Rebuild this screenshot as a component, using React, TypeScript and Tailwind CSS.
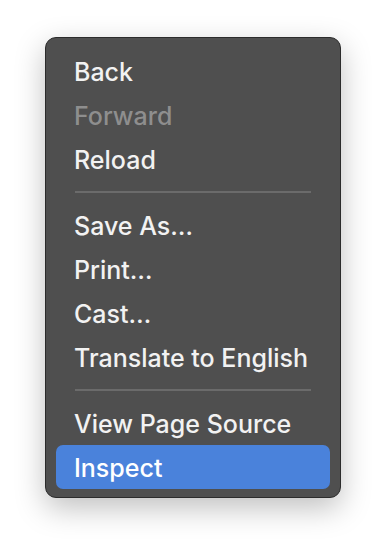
export default function App() {
  const Sep = () => (
    <div className="flex h-[22px] items-center px-[29px]">
      <div className="h-[2px] w-full bg-[#6b6b6b]" />
    </div>
  );
  const Item = ({ label, disabled, active }: { label: string; disabled?: boolean; active?: boolean }) => (
    <div
      className={
        "mx-[10px] flex h-[44px] items-center rounded-[7px] pl-[18px] text-[25px] font-medium leading-none " +
        (active ? "bg-[#4a82db] text-white" : disabled ? "text-[#8e8e8e]" : "text-[#f2f2f2]")
      }
    >
      <span className="pt-[2px]">{label}</span>
    </div>
  );
  return (
    <div className="h-[552px] w-[386px] bg-white" style={{ fontFamily: "Inter, 'Noto Sans', sans-serif" }}>
      <div className="pl-[45px] pt-[37px]">
        <div className="w-[296px] rounded-[11px] border border-[#2c2c2c] bg-[#4f4f4f] pt-[11px] pb-[8px] shadow-[0_10px_30px_rgba(0,0,0,0.25)]">
          <Item label="Back" />
          <Item label="Forward" disabled />
          <Item label="Reload" />
          <Sep />
          <Item label="Save As…" />
          <Item label="Print…" />
          <Item label="Cast…" />
          <Item label="Translate to English" />
          <Sep />
          <Item label="View Page Source" />
          <Item label="Inspect" active />
        </div>
      </div>
    </div>
  );
}
